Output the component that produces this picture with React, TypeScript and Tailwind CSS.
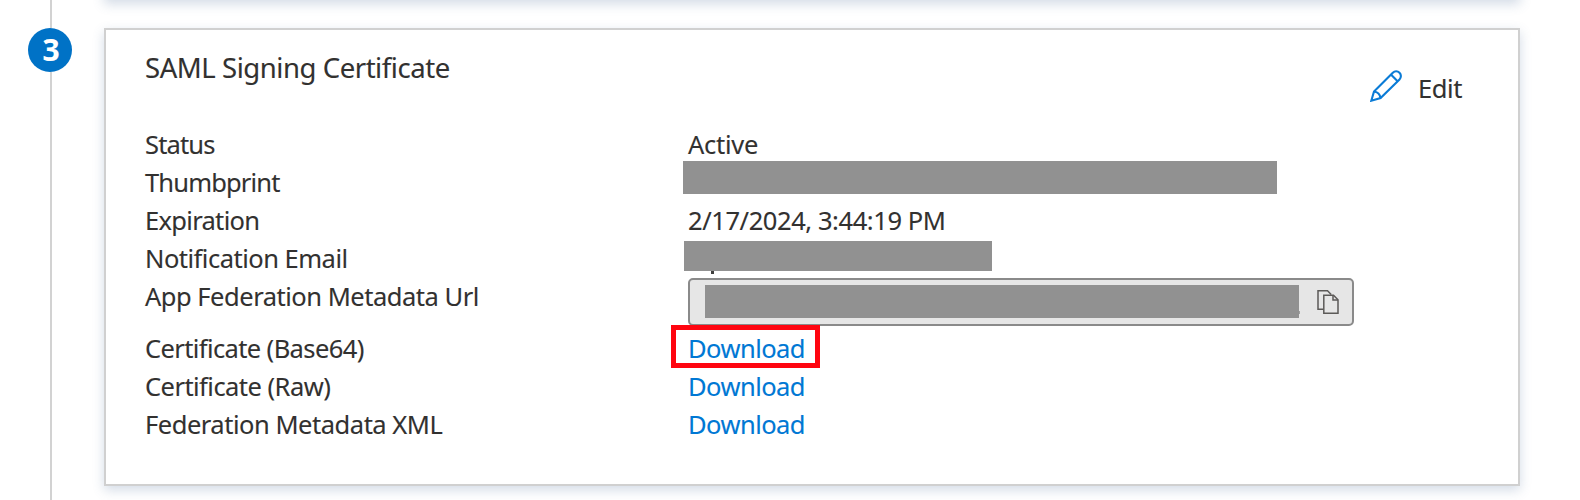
import type { ReactNode } from "react";

function PencilIcon() {
  return (
    <svg className="h-8 w-8 shrink-0" viewBox="0 0 32 32" fill="none" stroke="#0a7bd6" strokeWidth="2.1">
      <path d="M1.3 30.7 4 21.5 22.8 2.7 A4.7 4.7 0 0 1 29.5 9.4 L10.6 28.1 Z" />
      <path d="M20.9 4.5 27.6 11.2" />
      <path d="M4.1 21.8C7.4 21.8 10.2 24.4 10.4 28" />
    </svg>
  );
}

function CopyIcon() {
  return (
    <svg className="h-6 w-[22px] shrink-0" viewBox="0 0 22 24" fill="none" stroke="#5c5a58" strokeWidth="1.5">
      <path d="M6.5 19.2H1V.8H10.5L14.2 4.5" />
      <path d="M6.8 5.2H16.5L21 9.7V23.2H6.8Z" />
      <path d="M16 5.2V10H21" />
    </svg>
  );
}

function Row({ label, spacing, tall, children }: { label: string; spacing: string; tall?: boolean; children: ReactNode }) {
  return (
    <div className={tall ? "flex h-[52px] items-start" : "flex h-[38px] items-start"}>
      <div className={`w-[543px] shrink-0 whitespace-nowrap leading-[38px] ${spacing}`}>{label}</div>
      {children}
    </div>
  );
}

const link = "leading-[38px] tracking-[-0.55px] text-[#0078d4]";

export default function App() {
  return (
    <div className="flex h-[500px] w-[1580px] overflow-hidden bg-white font-['Noto_Sans','Open_Sans',sans-serif] text-[25.5px] text-[#323130] [-webkit-text-stroke:0.1px]">
      <div className="flex w-[104px] shrink-0 flex-col">
        <div className="ml-[50px] h-7 w-0.5 shrink-0 bg-[#d2d2d2]" />
        <div className="ml-7 flex h-11 w-11 shrink-0 items-center justify-center rounded-full bg-[#0072c6] pl-0.5 text-[30px] font-bold leading-none text-white">
          3
        </div>
        <div className="ml-[50px] w-0.5 flex-1 bg-[#d2d2d2]" />
      </div>

      <div className="flex w-[1416px] shrink-0 flex-col">
        <div className="-mt-10 mb-7 h-10 shrink-0 shadow-[0_4px_11px_rgba(70,105,150,0.24)]" />
        <section className="flex h-[458px] shrink-0 flex-col border-2 border-[#d0d0d0] bg-white pl-[39px] pr-14 shadow-[0_4px_11px_rgba(70,105,150,0.24)]">
          <header className="flex h-[95px] shrink-0 justify-between">
            <h2 className="mt-[19px] h-[38px] text-[27.5px] leading-[38px] tracking-[-0.44px]">SAML Signing Certificate</h2>
            <button className="mt-10 flex h-8 items-center gap-4">
              <PencilIcon />
              <span className="mt-[3px] leading-[38px] tracking-[-0.4px]">Edit</span>
            </button>
          </header>

          <Row label="Status" spacing="tracking-[-0.84px]">
            <span className="leading-[38px] tracking-[-0.26px]">Active</span>
          </Row>
          <Row label="Thumbprint" spacing="tracking-[-0.84px]">
            <div className="-ml-[5px] -mt-0.5 h-[33px] w-[594px] bg-[#919191]" />
          </Row>
          <Row label="Expiration" spacing="tracking-[-0.69px]">
            <span className="leading-[38px] tracking-[-0.42px]">2/17/2024, 3:44:19 PM</span>
          </Row>
          <Row label="Notification Email" spacing="tracking-[-0.5px]">
            <div className="-ml-1 mt-0.5">
              <div className="h-[30px] w-[308px] bg-[#919191]" />
              <div className="ml-[27px] h-[3px] w-[2.5px] bg-[#403f3e]" />
            </div>
          </Row>
          <Row label="App Federation Metadata Url" spacing="tracking-[-0.48px]" tall>
            <div className="mt-px flex h-12 w-[666px] items-center rounded-[5px] border-2 border-[#8a8a8a] bg-[#e6e6e6] pl-[15px]">
              <div className="-mt-0.5 h-[33px] w-[594px] shrink-0 bg-[#919191]" />
              <div className="mt-[21px] h-[3px] w-px shrink-0 bg-[#a0a0a0]" />
              <div className="ml-[17px]">
                <CopyIcon />
              </div>
            </div>
          </Row>
          <Row label="Certificate (Base64)" spacing="tracking-[-0.61px]">
            <div className="relative">
              <span className={link}>Download</span>
              <div className="absolute -left-[17px] -top-[4px] h-[43px] w-[149px] border-[5px] border-[#ff0510]" />
            </div>
          </Row>
          <Row label="Certificate (Raw)" spacing="tracking-[-0.54px]">
            <span className={link}>Download</span>
          </Row>
          <Row label="Federation Metadata XML" spacing="tracking-[-0.47px]">
            <span className={link}>Download</span>
          </Row>
        </section>
      </div>
    </div>
  );
}
